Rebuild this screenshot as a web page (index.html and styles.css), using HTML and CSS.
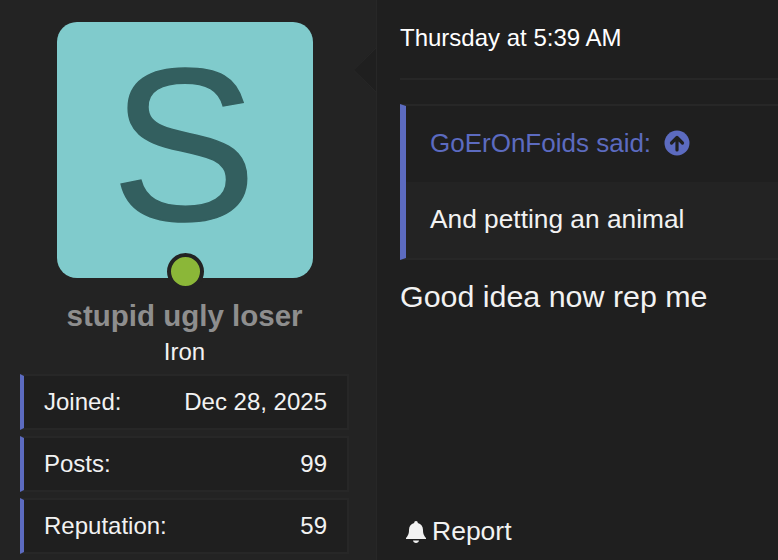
FILE: index.html
```html
<!DOCTYPE html>
<html lang="en">
<head>
    <meta charset="UTF-8">
    <meta name="viewport" content="width=device-width, initial-scale=1.0">
    <title>Post</title>
    <link rel="stylesheet" href="styles.css">
</head>
<body>
    <div class="post">
        <aside class="user">
            <div class="avatar">
                <span class="avatar-letter">S</span>
                <span class="online"></span>
            </div>
            <div class="user-name">stupid ugly loser</div>
            <div class="user-rank">Iron</div>
            <dl class="stat">
                <dt>Joined:</dt>
                <dd>Dec 28, 2025</dd>
            </dl>
            <dl class="stat">
                <dt>Posts:</dt>
                <dd>99</dd>
            </dl>
            <dl class="stat">
                <dt>Reputation:</dt>
                <dd>59</dd>
            </dl>
        </aside>
        <main class="content">
            <svg class="arrow" width="25" height="46" viewBox="0 0 25 46">
                <path d="M24 0 L1.5 22 L24 44" fill="#1f1f1f" stroke="#272727" stroke-width="1"/>
            </svg>
            <header class="post-date">Thursday at 5:39 AM</header>
            <blockquote class="quote">
                <div class="quote-title">
                    <span>GoErOnFoids said:</span>
                    <svg class="quote-icon" width="26" height="26" viewBox="0 0 26 26">
                        <circle cx="13" cy="13" r="12.5" fill="#5c6bc0"/>
                        <path d="M13 20 V7.5 M7.5 13 L13 7.5 L18.5 13" fill="none" stroke="#1f1f1f" stroke-width="3.2" stroke-linecap="round" stroke-linejoin="round"/>
                    </svg>
                </div>
                <div class="quote-body">And petting an animal</div>
            </blockquote>
            <p class="message">Good idea now rep me</p>
            <footer class="actions">
                <a class="report">
                    <svg width="22" height="24" viewBox="0 0 22 24">
                        <path d="M11 1 C9.8 1 9.2 1.9 9.2 3 C5.8 3.8 4 6.6 4 10 C4 14.2 2.8 15.8 1 18 V19 H21 V18 C19.2 15.8 18 14.2 18 10 C18 6.6 16.2 3.8 12.8 3 C12.8 1.9 12.2 1 11 1 Z" fill="#f2f2f2"/>
                        <path d="M8 20.5 H14 C13.8 22 12.6 23 11 23 C9.4 23 8.2 22 8 20.5 Z" fill="#f2f2f2"/>
                    </svg>
                    <span>Report</span>
                </a>
            </footer>
        </main>
    </div>
</body>
</html>
```

FILE: styles.css
```css
* {
    box-sizing: border-box;
    margin: 0;
    padding: 0;
}

html, body {
    height: 100%;
    overflow: hidden;
}

body {
    background-color: #1f1f1f;
    color: #f2f2f2;
    font-family: "Liberation Sans", Arial, sans-serif;
    font-size: 24px;
}

.post {
    display: flex;
    height: 560px;
}

.user {
    width: 376px;
    flex-shrink: 0;
    padding: 22px 27px 0 20px;
    background-color: #232323;
}

.avatar {
    position: relative;
    display: flex;
    justify-content: center;
    align-items: center;
    width: 256px;
    height: 256px;
    margin-left: 37px;
    border-radius: 20px;
    background-color: #80cbcc;
}

.avatar-letter {
    padding-bottom: 10px;
    padding-right: 2px;
    color: #335f5f;
    font-size: 218px;
    line-height: 1;
    -webkit-text-stroke: 1.5px #335f5f;
}

.online {
    position: absolute;
    left: 110px;
    bottom: -12px;
    width: 37px;
    height: 37px;
    border: 4px solid #232323;
    border-radius: 50%;
    background-color: #8bb738;
}

.user-name {
    margin-top: 20px;
    color: #8e8e8e;
    font-size: 29.5px;
    font-weight: bold;
    line-height: 36px;
    text-align: center;
}

.user-rank {
    line-height: 36px;
    text-align: center;
}

.stat {
    display: flex;
    justify-content: space-between;
    align-items: center;
    width: 329px;
    height: 56px;
    margin-top: 6px;
    padding: 0 20px 0 20px;
    border: 2px solid #272727;
    border-left: 4px solid #5c6bc0;
    background-color: #1f1f1f;
}

.user-rank + .stat {
    margin-top: 4px;
}

.content {
    position: relative;
    flex: 1;
    min-width: 0;
    padding-left: 23px;
    border-left: 1px solid #272727;
}

.arrow {
    position: absolute;
    left: -25px;
    top: 48px;
}

.post-date {
    height: 80px;
    padding-top: 24px;
    border-bottom: 2px solid #272727;
    color: #fff;
    line-height: 28px;
}

.quote {
    margin-top: 24px;
    border: 2px solid #272727;
    border-left: 6px solid #5c6bc0;
    border-right: 0;
    font-size: 26px;
}

.quote-title {
    display: flex;
    align-items: center;
    gap: 13px;
    height: 76px;
    padding-left: 24px;
    padding-bottom: 2px;
    color: #5c6bc0;
}

.quote-body {
    display: flex;
    align-items: center;
    height: 76px;
    padding-left: 24px;
    padding-bottom: 2px;
    background-color: #232323;
    font-size: 26.3px;
}

.message {
    margin-top: 18px;
    font-size: 30.4px;
    line-height: 36px;
}

.actions {
    position: absolute;
    left: 28px;
    bottom: 13px;
    font-size: 26.5px;
}

.report {
    display: flex;
    align-items: center;
    gap: 5px;
}
```
